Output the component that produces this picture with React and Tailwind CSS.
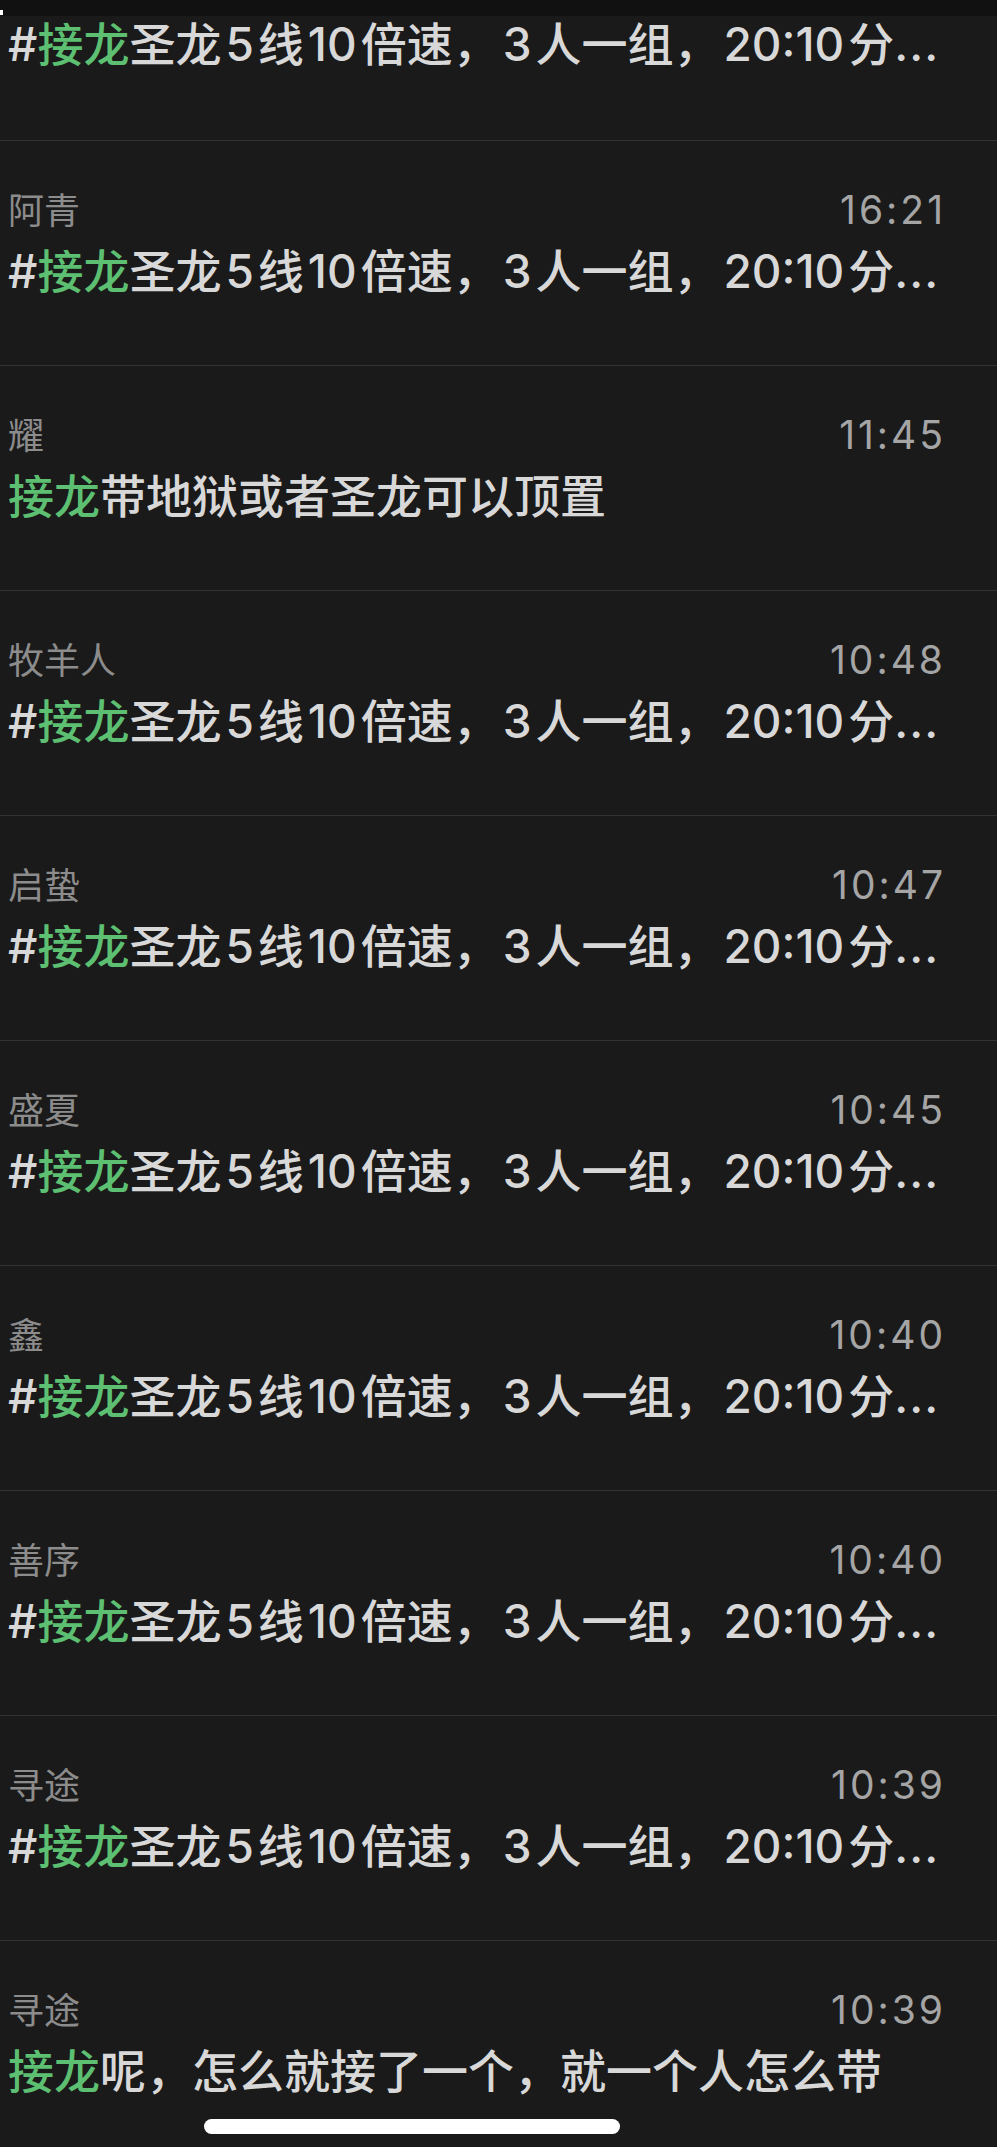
import React from "react";

const rows = [
  { name: "阿青", time: "16:21", type: "hash" },
  { name: "耀", time: "11:45", type: "plain", rest: "带地狱或者圣龙可以顶置" },
  { name: "牧羊人", time: "10:48", type: "hash" },
  { name: "启蛰", time: "10:47", type: "hash" },
  { name: "盛夏", time: "10:45", type: "hash" },
  { name: "鑫", time: "10:40", type: "hash" },
  { name: "善序", time: "10:40", type: "hash" },
  { name: "寻途", time: "10:39", type: "hash" },
  { name: "寻途", time: "10:39", type: "plain", rest: "呢，怎么就接了一个，就一个人怎么带" },
];

function Num({ children }) {
  return <span className="mx-[4px]">{children}</span>;
}

function Message({ type, rest }) {
  return (
    <div className="h-[46px] whitespace-nowrap text-[46px] leading-[46px] font-medium text-[#d8d8d8]">
      {type === "hash" ? (
        <>
          <span>#</span>
          <span className="text-[#5cbf71]">接龙</span>
          <span>圣龙</span>
          <Num>5</Num>
          <span>线</span>
          <Num>10</Num>
          <span>倍速，</span>
          <Num>3</Num>
          <span>人一组，</span>
          <Num>20:10</Num>
          <span>分</span>
          <span className="tracking-[1px]">...</span>
        </>
      ) : (
        <>
          <span className="text-[#5cbf71]">接龙</span>
          <span>{rest}</span>
        </>
      )}
    </div>
  );
}

export default function App() {
  return (
    <div className="min-h-[2147px] w-[997px] bg-[#1a1a1a] font-[Inter,'Noto_Sans_CJK_SC',sans-serif]">
      <div className="h-[16px] bg-[#111111] pt-[10px]">
        <div className="h-[5px] w-[3px] bg-white" />
      </div>
      <div className="h-[124px] pl-[8px] pt-[5px]">
        <Message type="hash" />
      </div>
      {rows.map((r, i) => (
        <div
          key={i}
          className={
            "border-t border-[#333333] pl-[8px] pr-[51px] pt-[51px] " +
            (i === rows.length - 1 ? "h-[207px]" : "h-[225px]")
          }
        >
          <div className="flex items-baseline justify-between">
            <span className="text-[36px] leading-[36px] text-[#8c8c8c]">{r.name}</span>
            <span className="text-[39px] leading-[36px] tracking-[3px] text-[#a5a5a5]">{r.time}</span>
          </div>
          <div className="mt-[19px]">
            <Message type={r.type} rest={r.rest} />
          </div>
        </div>
      ))}
      <div className="-mt-[28px] ml-[204px] h-[15px] w-[416px] rounded-full bg-white" />
    </div>
  );
}
